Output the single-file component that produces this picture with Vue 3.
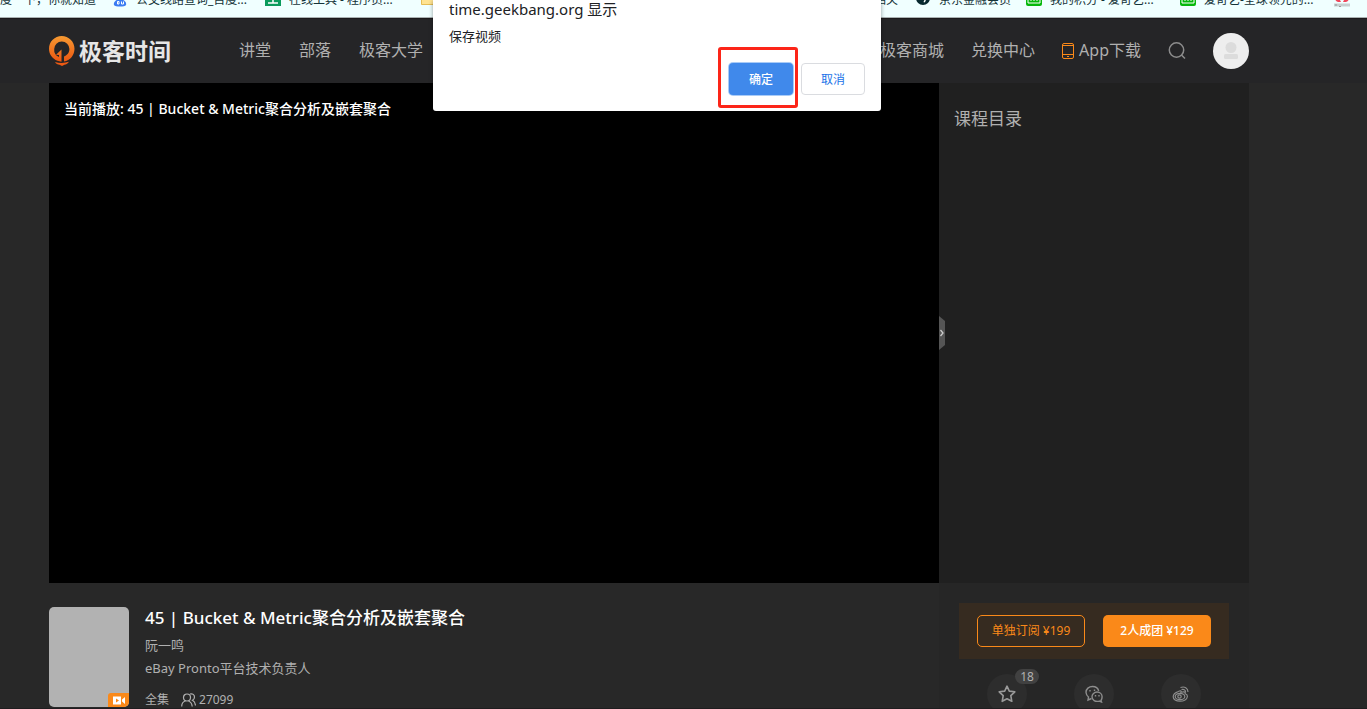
<script setup>
const leftNav = ['讲堂', '部落', '极客大学']
const rightNav = ['极客商城', '兑换中心']
const bookmarks = [
  { icon: '', text: '度一下，你就知道' },
  { icon: 'baidu', text: '公交线路查询_百度...' },
  { icon: 'tool', text: '在线工具 - 程序员...' },
  { icon: 'folder', text: '' },
  { icon: '', text: '相关' },
  { icon: 'jd', text: '京东金融会员' },
  { icon: 'iqiyi', text: '我的积分 - 爱奇艺...' },
  { icon: 'iqiyi', text: '爱奇艺-全球领先的...' },
  { icon: 'huawei', text: '' }
]
</script>

<template>
  <div class="page">
    <nav class="bookmarks" aria-label="书签">
      <a v-for="(b, i) in bookmarks" :key="i" href="#" class="bookmark">
        <svg v-if="b.icon" class="favicon" viewBox="0 0 16 16" aria-hidden="true">
          <g v-if="b.icon === 'baidu'" fill="#3b7cf2">
            <path d="M2 14c-1-3 3-6 6-6s7 3 6 6c-1 2-11 2-12 0Z" />
            <circle cx="3" cy="7" r="2" /><circle cx="13" cy="7" r="2" />
            <path d="M7 10.500H5.500v2.500H7zM9.500 10.500V13h2v-2.500" fill="none" stroke="#fff" />
          </g>
          <g v-else-if="b.icon === 'tool'">
            <path d="M0 0h16v15H0z" fill="#0a9b5c" />
            <path d="M3 12h10M8 4v8" stroke="#fff" stroke-width="1.500" />
          </g>
          <g v-else-if="b.icon === 'folder'">
            <path d="M.5 1.500h6l2 2h7v10H.5z" fill="#ffe391" stroke="#e5bd55" />
          </g>
          <g v-else-if="b.icon === 'jd'">
            <circle cx="8" cy="7" r="7" fill="#08292f" />
            <path d="M7 7c3-1 5 1 3 4-1 1-2 0-1-1 1-2 0-2-2-3Z" fill="#fff" />
          </g>
          <g v-else-if="b.icon === 'iqiyi'">
            <rect width="16" height="15" rx="2" fill="#06b80b" />
            <path d="M2 4v8h12V4M5 6v4M8 6v4M11 6v4" fill="none" stroke="#fff" stroke-width="1" />
          </g>
          <g v-else fill="#f0485c">
            <path d="M1 7q4-1 6 4H4Q1 10 1 7ZM15 7q-4-1-6 4h3q3-1 3-4Z" />
            <path d="M1 12.500v3M3 12.500v3M1 14h2M5 12.500v3h2v-3M9 12.500v3M11 12.500v3M13 12.500v3M15 12.500v3" fill="none" stroke="#888" stroke-width=".8" />
          </g>
        </svg>
        <span v-if="b.text">{{ b.text }}</span>
      </a>
    </nav>

    <header class="header">
      <a href="#" class="brand">
        <svg class="logo" viewBox="0 0 26 30" aria-hidden="true">
          <defs>
            <linearGradient id="flame" x1="0" y1="0" x2="0" y2="1">
              <stop offset="0" stop-color="#f69a32" /><stop offset="1" stop-color="#eb5611" />
            </linearGradient>
          </defs>
          <path fill="url(#flame)" d="M12.700 0C5.700 0 0 5.700 0 12.700c0 5.500 3.300 10 8.500 12l4 1V13.500L7 18.700l3 .3v2A8 8 0 0 1 5.200 13a7.600 7.600 0 0 1 15.200 0c0 3.600-2.200 6.400-5.400 7.500v5c6.200-1.200 10.500-6.300 10.500-12.800C25.500 5.700 19.700 0 12.700 0Z" />
          <path fill="#ed5a13" d="M6 26c4 1.300 9.500 1.300 14-.2-1.300 2-3 2.700-4.500 2.900L13 30l-2.500-1.300C8.700 28.500 7 27.800 6 26Z" />
        </svg>
        <span>极客时间</span>
      </a>
      <nav class="nav main-nav">
        <a v-for="n in leftNav" :key="n" href="#" class="nav-link">{{ n }}</a>
      </nav>
      <nav class="nav user-nav">
        <a v-for="n in rightNav" :key="n" href="#" class="nav-link">{{ n }}</a>
        <a href="#" class="app-link">
          <svg width="12" height="16" viewBox="0 0 12 16" fill="none" stroke="#fa8919" aria-hidden="true">
            <rect x=".5" y=".5" width="11" height="15" rx="1.500" />
            <path d="M1 2.500h10M1 11.500h10M5 13.500h2" />
          </svg>
          <span class="nav-link">App下载</span>
        </a>
        <button class="search" aria-label="搜索">
          <svg width="18" height="18" viewBox="0 0 18 18" fill="none" stroke="#8c8c8c" stroke-width="1.500">
            <circle cx="8.500" cy="8" r="7.200" /><path d="m13.500 13 3.500 3.500" />
          </svg>
        </button>
        <a href="#" class="avatar" aria-label="个人中心">
          <svg viewBox="0 0 36 36" width="36" height="36">
            <circle cx="18" cy="18" r="18" fill="#eee" />
            <circle cx="18" cy="14.500" r="5.500" fill="#dcdcdc" />
            <rect x="11" y="21" width="14" height="5" rx="1.500" fill="#dcdcdc" />
          </svg>
        </a>
      </nav>
    </header>

    <main class="main">
      <section class="content">
        <div class="player">当前播放: 45 | Bucket &amp; Metric聚合分析及嵌套聚合</div>
        <div class="lesson">
          <div class="cover">
            <span class="video-tag">
              <svg width="12" height="9" viewBox="0 0 12 9" aria-hidden="true">
                <path fill="#fff" d="M0 .5h8v8H0zM9 3.500l3-2.500v7L9 5.500z" />
                <path fill="#fa8919" d="M3 2.500v4l3-2z" />
              </svg>
            </span>
          </div>
          <div class="details">
            <h1>45 | Bucket &amp; Metric聚合分析及嵌套聚合</h1>
            <p>阮一鸣</p>
            <p>eBay Pronto平台技术负责人</p>
            <div class="stats">
              <span>全集</span>
              <svg width="15" height="14" viewBox="0 0 15 14" fill="none" stroke="#b0b0b0" stroke-width="1.200" aria-hidden="true">
                <circle cx="6" cy="4.500" r="3.500" />
                <path d="M.7 13.500c0-3 1.800-5 4-5.700M7.500 8c2.200.8 3.500 2.600 3.700 5.500M9 1c2.500-.8 4.500.8 4.500 3 0 1.500-.8 2.700-2 3.300 1.800 1 2.800 2.700 3 5.200" />
              </svg>
              <span>27099</span>
            </div>
          </div>
        </div>
      </section>

      <aside class="sidebar">
        <div class="catalog">
          <h2>课程目录</h2>
          <button class="collapse" aria-label="收起目录">
            <svg width="6" height="34" viewBox="0 0 6 34">
              <path d="M0 0l6 5v24l-6 5z" fill="#555" />
              <path d="m1.500 14 2.500 3-2.500 3" fill="none" stroke="#ccc" stroke-width="1.300" />
            </svg>
          </button>
        </div>
        <div class="purchase">
          <button class="outline">单独订阅 ¥199</button>
          <button class="solid">2人成团 ¥129</button>
        </div>
        <div class="actions">
          <button class="round" aria-label="收藏">
            <svg width="18" height="18" viewBox="0 0 18 18" fill="none" stroke="#9a9a9a" stroke-width="1.600" stroke-linejoin="round">
              <path d="m9 1.200 2.300 4.900 5.500.7-4 3.800 1 5.700L9 13.700l-4.800 2.600 1-5.700-4-3.800 5.500-.7Z" />
            </svg>
            <span class="count">18</span>
          </button>
          <button class="round" aria-label="分享到微信">
            <svg width="18" height="18" viewBox="0 0 18 18" fill="none" stroke="#8d8d8d" stroke-width="1.400">
              <path d="M6.500 13.500 3 15l.5-3A6.200 6.200 0 0 1 1 7.300C1 3.900 3.900 1.500 7.500 1.500c3 0 5.600 2 6.200 4.500" />
              <path d="M16 15.500 16.500 17l-2.200-.9c-4 1-7.300-1-7.300-4.300 0-2.600 2.200-4.800 5.100-4.800s5 2.200 5 4.800c0 1.500-.4 2.700-1.100 3.700Z" />
              <path d="M5 5v1.500M9.500 4.500V6M10.500 10v1.500M14 10v1.500" />
            </svg>
          </button>
          <button class="round" aria-label="分享到微博">
            <svg width="18" height="18" viewBox="0 0 18 18" fill="none" stroke="#8d8d8d" stroke-width="1.200">
              <path d="M6.500 6.500C8.500 5 9.500 6 9 7.300c3-1 4.500-.5 4.200 1.500 1.700.6 2.300 1.400 2.200 2.700-.3 2.800-3.500 4.700-7.400 4.700-4 0-6.800-1.700-6.800-4.500 0-2 1.600-4 5.300-5.200Z" />
              <ellipse cx="8" cy="11.500" rx="4.800" ry="3.200" /><circle cx="7.500" cy="11.500" r="1.700" />
              <path d="M9.500 4.500c2.500-.8 4.300.8 4 3M8.500 2.500c4-1.500 7.500.5 7.500 4.500" />
            </svg>
          </button>
        </div>
      </aside>
    </main>

    <div class="dialog" role="dialog" aria-label="time.geekbang.org 显示">
      <div class="origin">time.geekbang.org 显示</div>
      <p>保存视频</p>
      <div class="dialog-actions">
        <span class="highlight"><button class="ok">确定</button></span>
        <button class="cancel">取消</button>
      </div>
    </div>
  </div>
</template>

<style>
body { margin: 0; background: #282828; }
</style>

<style scoped>
* { box-sizing: border-box; }
.page {
  position: relative;
  height: 100vh;
  overflow: hidden;
  border-bottom: 1px solid #1f1d1f;
  font-family: "Noto Sans", "Noto Sans CJK SC", sans-serif;
  color: #b0b0b0;
  background: #282828;
}
a { color: inherit; text-decoration: none; }
button { font-family: inherit; padding: 0; border: 0; background: none; color: inherit; cursor: pointer; }
h1, h2, p { margin: 0; font-weight: 400; }
svg { display: block; flex: none; }

.bookmarks {
  display: grid;
  grid-template-columns: 112px 153px 156px 1fr 41px 111px 154px 154px 33px;
  align-items: center;
  height: 35px;
  margin-top: -17px;
  background: #f0ffff;
  border-bottom: 1px solid #aab2b2;
  color: #143338;
  font-size: 12px;
  line-height: 34px;
  white-space: nowrap;
}
.bookmark { display: flex; align-items: center; gap: 8px; }
.favicon { width: 16px; height: 16px; margin-bottom: 2px; }

.header {
  display: flex;
  align-items: center;
  height: 65px;
  padding: 0 118px 0 49px;
  background: #252527;
  border-top: 1px solid #1c191b;
}
.brand {
  display: flex;
  align-items: center;
  gap: 4px;
  color: #e6e6e6;
  font-size: 23px;
  font-weight: 700;
  line-height: 32px;
}
.logo { width: 26px; height: 30px; }
.nav { display: flex; align-items: center; gap: 28px; font-size: 16px; line-height: 24px; white-space: nowrap; }
.nav-link { padding-bottom: 2px; }
.main-nav { margin-left: 68px; }
.user-nav { gap: 27px; margin-left: auto; }
.app-link { display: flex; align-items: center; gap: 5px; }

.main { display: flex; padding: 0 118px 0 49px; }
.content { flex: 1; min-width: 0; }
.player {
  height: 500px;
  padding: 16px 15px;
  background: #000;
  color: #fff;
  font-size: 14px;
  font-weight: 500;
  line-height: 20px;
}
.lesson { display: flex; gap: 16px; padding-top: 24px; }
.cover {
  position: relative;
  flex: none;
  width: 80px;
  height: 100px;
  border-radius: 5px;
  background: #b2b2b2;
  overflow: hidden;
}
.video-tag {
  position: absolute;
  right: 0;
  bottom: 0;
  display: grid;
  place-items: center;
  width: 21px;
  height: 14px;
  border-radius: 3px 0 0 0;
  background: #fa8919;
}
.details { font-size: 13px; line-height: 23px; }
.details h1 { margin-bottom: 5px; color: #fff; font-size: 17px; font-weight: 500; line-height: 22px; }
.stats { display: flex; align-items: center; margin-top: 8px; font-size: 12px; }
.stats svg { margin: 0 3px 0 12px; }

.sidebar { flex: none; width: 310px; background: #262626; }
.catalog { position: relative; height: 500px; padding: 24px 15px; background: #202020; }
.catalog h2 { font-size: 17px; line-height: 24px; }
.collapse { position: absolute; left: 0; top: 233px; }
.purchase {
  display: flex;
  justify-content: space-between;
  margin: 20px;
  margin-bottom: 0;
  padding: 12px 18px;
  background: #362b20;
}
.purchase button { width: 108px; height: 32px; padding-bottom: 2px; border-radius: 5px; font-size: 12px; }
.purchase .outline { border: 1px solid #fa8919; color: #fa8919; }
.purchase .solid { background: #fa8919; color: #fff; font-weight: 500; }
.actions { display: flex; justify-content: space-between; padding: 15px 48px; }
.round { position: relative; display: grid; place-items: center; width: 40px; height: 40px; border-radius: 50%; background: #2d2d2d; }
.count {
  position: absolute;
  left: 28px;
  top: -5px;
  width: 24px;
  border-radius: 8px;
  background: #414141;
  color: #b0b0b0;
  font-size: 12px;
  line-height: 15px;
}

.dialog {
  position: absolute;
  top: 0;
  left: 433px;
  width: 448px;
  padding: 0 16px 3px;
  border-radius: 0 0 3px 3px;
  background: #fff;
  color: #202124;
  box-shadow: 0 1px 4px rgba(0, 0, 0, .4);
}
.origin { font-size: 15px; line-height: 18px; }
.dialog p { padding: 8px 0 1px; font-size: 13px; line-height: 20px; }
.dialog-actions { display: flex; justify-content: flex-end; align-items: flex-end; gap: 3px; }
.highlight { padding: 12px 1px 9px 7px; border: 3px solid #fc2518; border-radius: 3px; }
.dialog button { display: block; height: 32px; border-radius: 4px; font-size: 12px; }
.ok { width: 64px; margin: 1px; background: #4089eb; color: #fff; font-weight: 500; box-shadow: 0 0 0 1px #a9cbf7; }
.dialog .cancel { width: 64px; margin-bottom: 13px; border: 1px solid #dadce0; color: #1a73e8; }
</style>
